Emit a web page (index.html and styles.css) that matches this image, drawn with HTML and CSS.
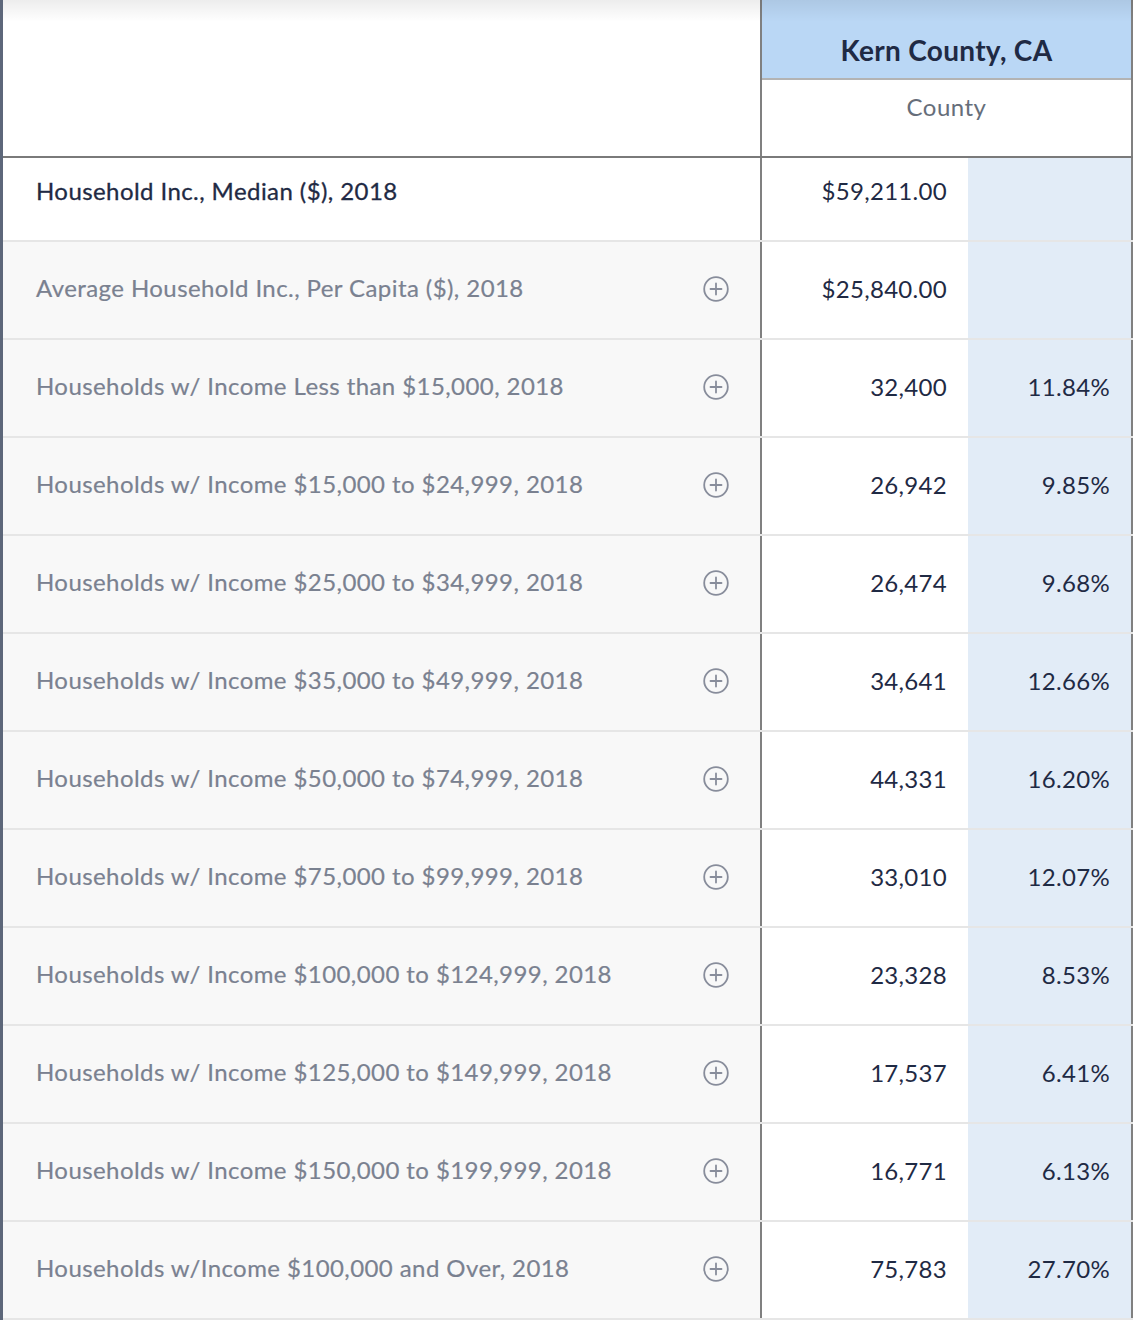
FILE: index.html
```html
<!DOCTYPE html>
<html>
<head>
<meta charset="utf-8">
<link rel="stylesheet" href="styles.css">
</head>
<body>
<div class="table">
  <div class="head">
    <div class="hd-label"></div>
    <div class="hd-county">
      <div class="hd-name">Kern County, CA</div>
      <div class="hd-sub">County</div>
    </div>
  </div>

  <div class="row first">
    <div class="label"><span class="text">Household Inc., Median ($), 2018</span></div>
    <div class="val">$59,211.00</div>
    <div class="pct"></div>
  </div>

  <div class="row">
    <div class="label"><span class="text">Average Household Inc., Per Capita ($), 2018</span><svg class="plus" viewBox="0 0 26 26"><circle cx="13" cy="13" r="11.8"/><path d="M13 7.5v11M7.5 13h11"/></svg></div>
    <div class="val">$25,840.00</div>
    <div class="pct"></div>
  </div>

  <div class="row">
    <div class="label"><span class="text">Households w/ Income Less than $15,000, 2018</span><svg class="plus" viewBox="0 0 26 26"><circle cx="13" cy="13" r="11.8"/><path d="M13 7.5v11M7.5 13h11"/></svg></div>
    <div class="val">32,400</div>
    <div class="pct">11.84%</div>
  </div>

  <div class="row">
    <div class="label"><span class="text">Households w/ Income $15,000 to $24,999, 2018</span><svg class="plus" viewBox="0 0 26 26"><circle cx="13" cy="13" r="11.8"/><path d="M13 7.5v11M7.5 13h11"/></svg></div>
    <div class="val">26,942</div>
    <div class="pct">9.85%</div>
  </div>

  <div class="row">
    <div class="label"><span class="text">Households w/ Income $25,000 to $34,999, 2018</span><svg class="plus" viewBox="0 0 26 26"><circle cx="13" cy="13" r="11.8"/><path d="M13 7.5v11M7.5 13h11"/></svg></div>
    <div class="val">26,474</div>
    <div class="pct">9.68%</div>
  </div>

  <div class="row">
    <div class="label"><span class="text">Households w/ Income $35,000 to $49,999, 2018</span><svg class="plus" viewBox="0 0 26 26"><circle cx="13" cy="13" r="11.8"/><path d="M13 7.5v11M7.5 13h11"/></svg></div>
    <div class="val">34,641</div>
    <div class="pct">12.66%</div>
  </div>

  <div class="row">
    <div class="label"><span class="text">Households w/ Income $50,000 to $74,999, 2018</span><svg class="plus" viewBox="0 0 26 26"><circle cx="13" cy="13" r="11.8"/><path d="M13 7.5v11M7.5 13h11"/></svg></div>
    <div class="val">44,331</div>
    <div class="pct">16.20%</div>
  </div>

  <div class="row">
    <div class="label"><span class="text">Households w/ Income $75,000 to $99,999, 2018</span><svg class="plus" viewBox="0 0 26 26"><circle cx="13" cy="13" r="11.8"/><path d="M13 7.5v11M7.5 13h11"/></svg></div>
    <div class="val">33,010</div>
    <div class="pct">12.07%</div>
  </div>

  <div class="row">
    <div class="label"><span class="text">Households w/ Income $100,000 to $124,999, 2018</span><svg class="plus" viewBox="0 0 26 26"><circle cx="13" cy="13" r="11.8"/><path d="M13 7.5v11M7.5 13h11"/></svg></div>
    <div class="val">23,328</div>
    <div class="pct">8.53%</div>
  </div>

  <div class="row">
    <div class="label"><span class="text">Households w/ Income $125,000 to $149,999, 2018</span><svg class="plus" viewBox="0 0 26 26"><circle cx="13" cy="13" r="11.8"/><path d="M13 7.5v11M7.5 13h11"/></svg></div>
    <div class="val">17,537</div>
    <div class="pct">6.41%</div>
  </div>

  <div class="row">
    <div class="label"><span class="text">Households w/ Income $150,000 to $199,999, 2018</span><svg class="plus" viewBox="0 0 26 26"><circle cx="13" cy="13" r="11.8"/><path d="M13 7.5v11M7.5 13h11"/></svg></div>
    <div class="val">16,771</div>
    <div class="pct">6.13%</div>
  </div>

  <div class="row">
    <div class="label"><span class="text">Households w/Income $100,000 and Over, 2018</span><svg class="plus" viewBox="0 0 26 26"><circle cx="13" cy="13" r="11.8"/><path d="M13 7.5v11M7.5 13h11"/></svg></div>
    <div class="val">75,783</div>
    <div class="pct">27.70%</div>
  </div>
</div>
</body>
</html>
```

FILE: styles.css
```css
* { box-sizing: border-box; }
html, body {
  margin: 0;
  padding: 0;
  background: #ffffff;
}
body {
  font-family: Lato, "Open Sans", "Liberation Sans", sans-serif;
  color: #1f2a44;
}
.table {
  width: 1133px;
  border-left: 3px solid #5d677a;
  position: relative;
}
.table::before {
  content: "";
  position: absolute;
  left: 0;
  top: 0;
  width: 100%;
  height: 22px;
  background: linear-gradient(to bottom, rgba(0,0,0,0.07), rgba(0,0,0,0));
  pointer-events: none;
  z-index: 2;
}
.head {
  display: flex;
  height: 158px;
  border-bottom: 2px solid #7a7a7a;
}
.hd-label {
  width: 759px;
  border-right: 2px solid #808080;
  background: #ffffff;
}
.hd-county {
  width: 371px;
  border-right: 2px solid #808080;
  display: flex;
  flex-direction: column;
}
.hd-name {
  height: 80px;
  background: #bad7f5;
  border-bottom: 2px solid #b3b3b3;
  font-weight: 700;
  font-size: 28px;
  letter-spacing: 0.3px;
  color: #1f2a44;
  display: flex;
  align-items: center;
  justify-content: center;
  padding-top: 22px;
}
.hd-sub {
  flex: 1;
  display: flex;
  justify-content: center;
  padding-top: 12px;
  font-size: 24px;
  letter-spacing: 0.5px;
  color: #666e7a;
}
.row {
  display: flex;
  height: 98px;
  border-bottom: 2px solid #e6e6e6;
}
.row.first {
  height: 84px;
}
.label {
  width: 759px;
  border-right: 2px solid #808080;
  background: #f8f8f8;
  display: flex;
  align-items: center;
  justify-content: space-between;
  padding: 0 31px 2px 33px;
  font-size: 24px;
  letter-spacing: 0.42px;
  color: #7a8190;
  -webkit-text-stroke: 0.2px #7a8190;
}
.label .text {
  position: relative;
  top: -1px;
}
.first .label {
  background: #ffffff;
  color: #1f2a44;
  -webkit-text-stroke: 0.3px #1f2a44;
  align-items: flex-start;
  padding-top: 19px;
}
.first .label .text {
  top: 0;
}
.text {
  line-height: 28px;
  white-space: nowrap;
}
.plus {
  width: 26px;
  height: 26px;
  fill: none;
  stroke: #888d9b;
  stroke-width: 1.8;
  stroke-linecap: round;
}
.val {
  width: 206px;
  background: #ffffff;
  display: flex;
  align-items: center;
  justify-content: flex-end;
  padding: 0 21px 4px 0;
  font-size: 24px;
  letter-spacing: 0.3px;
  color: #1f2a44;
}
.pct {
  width: 165px;
  background: #e2ecf7;
  border-right: 2px solid #808080;
  display: flex;
  align-items: center;
  justify-content: flex-end;
  padding: 0 21px 4px 0;
  font-size: 24px;
  letter-spacing: 0.3px;
  color: #1f2a44;
}
.first .val,
.first .pct {
  align-items: flex-start;
  padding-top: 19px;
  padding-bottom: 0;
  line-height: 28px;
}
```
